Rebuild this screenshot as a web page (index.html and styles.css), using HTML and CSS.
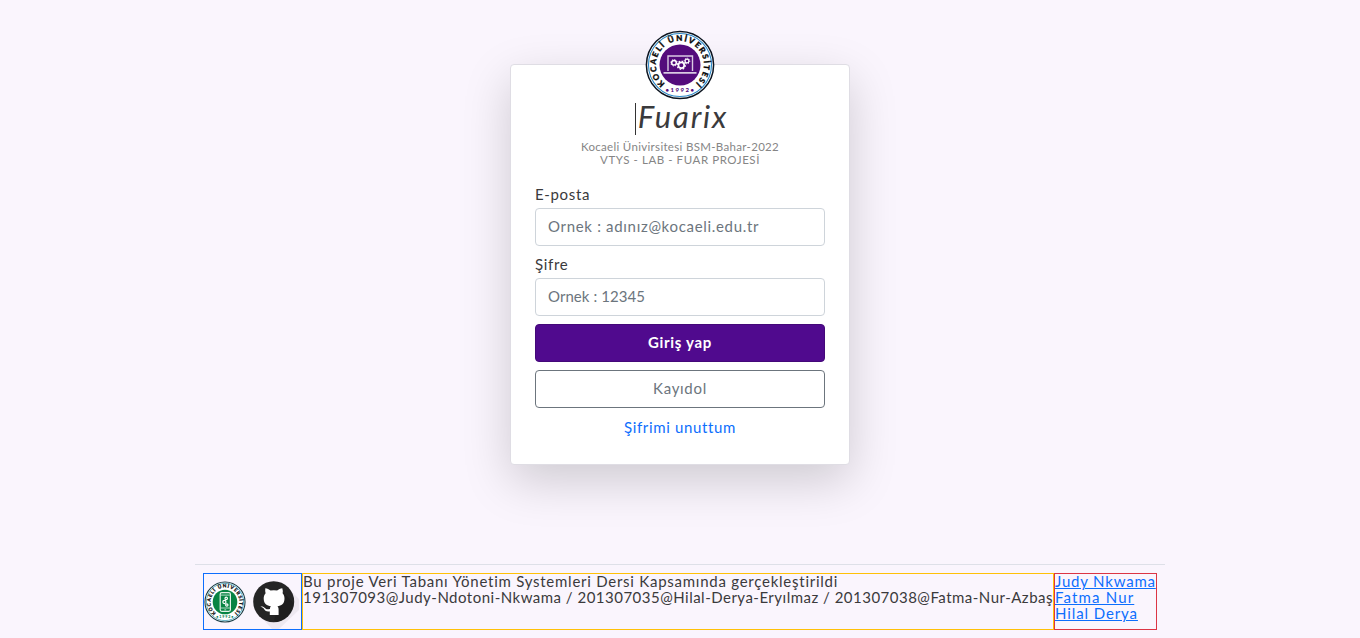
FILE: index.html
```html
<!DOCTYPE html>
<html lang="tr">
<head>
<meta charset="utf-8">
<title>Fuarix</title>
<link rel="stylesheet" href="styles.css">
</head>
<body>
<main class="card">
  <svg class="seal" viewBox="0 0 70 70">
    <circle cx="35" cy="35" r="33.6" fill="#fff" stroke="#0b1420" stroke-width="1.5"/>
    <circle cx="35" cy="35" r="31.5" fill="none" stroke="#2b86c5" stroke-width="1.1"/>
    <circle cx="35" cy="35" r="20.5" fill="#540b7c"/>
    <path id="ring" d="M19.9 53.6A24 24 0 1 1 50.1 53.6" fill="none"/>
    <text class="seal-name"><textPath href="#ring" textLength="117">KOCAELİ ÜNİVERSİTESİ</textPath></text>
    <text class="seal-year purple" x="35.5" y="62">•1992•</text>
    <g fill="none" stroke="#d9c9e2">
      <path d="M23 41V26h24.5V41" stroke-width="1.4"/>
      <path d="M18.5 42.8h33" stroke-width="1.8"/>
    </g>
    <g fill="none" stroke="#fff">
      <circle cx="29" cy="32.8" r="2.3" stroke-width="1.5"/><circle cx="29" cy="32.8" r="3.2" stroke-dasharray="1.25"/>
      <circle cx="36.3" cy="35.3" r="2.9" stroke-width="1.7"/><circle cx="36.3" cy="35.3" r="4.1" stroke-width="1.2" stroke-dasharray="1.6"/>
      <circle cx="42" cy="31" r="1.9" stroke-width="1.2"/><circle cx="42" cy="31" r="2.8" stroke-dasharray="1.05"/>
    </g>
  </svg>
  <h1 class="brand"><span class="caret"></span><i>Fuarix</i></h1>
  <p class="subtitle"><span class="university">Kocaeli Ünivirsitesi BSM-Bahar-2022</span><br><span class="course">VTYS - LAB - FUAR PROJESİ</span></p>
  <form class="form">
    <label class="label" for="mail">E-posta</label>
    <input class="field" id="mail" type="text" placeholder="Ornek : adınız@kocaeli.edu.tr">
    <label class="label second" for="pass">Şifre</label>
    <input class="field password" id="pass" type="text" placeholder="Ornek : 12345">
    <button class="btn primary" type="button">Giriş yap</button>
    <button class="btn outline" type="button">Kayıdol</button>
    <a class="forgot">Şifrimi unuttum</a>
  </form>
</main>
<footer class="footer">
  <div class="box logos">
    <svg class="mini" viewBox="0 0 70 70">
      <circle cx="35" cy="35" r="33.4" fill="#fff" stroke="#173b45" stroke-width="1.8"/>
      <circle cx="35" cy="35" r="31" fill="none" stroke="#3e9bb0" stroke-width="1.3"/>
      <circle cx="35" cy="35" r="20.5" fill="#078443"/>
      <text class="seal-name"><textPath href="#ring" textLength="117">KOCAELİ ÜNİVERSİTESİ</textPath></text>
      <text class="seal-year green" x="35.5" y="62">•1992•</text>
      <rect x="27" y="19.5" width="17" height="31" rx="2.5" fill="none" stroke="#e4f3e9" stroke-width="2"/>
      <path d="M28 23.5h15M28 45h15M34 48h3" stroke="#e4f3e9" stroke-width="1.3"/>
      <g fill="none" stroke="#fff" stroke-width="2"><circle cx="37" cy="29" r="2"/><circle cx="34" cy="35" r="2.6"/><circle cx="38" cy="40" r="2"/></g>
    </svg>
    <svg class="github" viewBox="0 0 49 56">
      <path d="M10 42 37 13 49 25V36L29 55H22Z" fill="#000" opacity=".05"/>
      <circle cx="23.7" cy="27.7" r="20.5" fill="#252525"/>
      <path d="M24 46 34 19 43.2 29A20.5 20.5 0 0 1 26 48Z" fill="#171717" opacity=".45"/>
      <path d="M15.3 14.3c1.9.1 3.8 1.1 5.2 2.2q3.2-.7 6.6 0c1.5-1.1 3.4-2.1 5.2-2.2q.9 2.6.3 5c1.4 1.6 1.9 3.2 1.9 5.2 0 5.4-3.2 7.2-7 7.8.8.8 1.1 1.8 1.1 3.2v5.6h-8.8v-3.7c-3.4.6-5-.8-5.9-2.6-.8-1.2-2-1.5-3.5-2.3 4.1-.7 4.8 2.8 7.2 2.8q1.1 0 2.3-.4.1-1.8 1-2.6c-3.8-.6-7.2-2.4-7.2-7.8 0-2 .5-3.6 1.9-5.2q-.7-2.4-.3-5Z" fill="#fff"/>
    </svg>
  </div>
  <div class="box about"><span class="purpose">Bu proje Veri Tabanı Yönetim Systemleri Dersi Kapsamında gerçekleştirildi</span><span class="members">191307093@Judy-Ndotoni-Nkwama / 201307035@Hilal-Derya-Eryılmaz / 201307038@Fatma-Nur-Azbaş</span></div>
  <div class="box links"><a class="judy">Judy Nkwama</a><a class="fatma">Fatma Nur</a><a class="hilal">Hilal Derya</a></div>
</footer>
</body>
</html>
```

FILE: styles.css
```css
* { box-sizing: border-box; }
body { margin: 0; height: 638px; overflow: hidden; background: #faf5fd; color: #3a3a3c; font: 15px/16px Lato, "Open Sans", sans-serif; letter-spacing: .65px; display: flex; flex-direction: column; align-items: center; }
.card { width: 340px; height: 401px; margin-top: 64px; padding: 0 24px; background: #fff; border: 1px solid #dfdde4; border-radius: 4px; box-shadow: 0 16px 48px rgba(0,0,0,.175); display: flex; flex-direction: column; align-items: center; }
.seal { width: 70px; height: 70px; margin-top: -35px; flex: none; }
.seal-name { font: 900 8px Lato, sans-serif; letter-spacing: 0; fill: #080808; stroke: #080808; stroke-width: .3px; }
.seal-year { font: 900 6px Lato, sans-serif; letter-spacing: 1.5px; text-anchor: middle; }
.purple { fill: #540b7c; }
.green { fill: #087a55; }
.brand { display: flex; align-items: flex-start; margin: 3px 0 0 3px; height: 32px; font-size: 31px; line-height: 27px; font-weight: 400; letter-spacing: 1.8px; white-space: nowrap; }
.caret { width: 1px; height: 32px; margin-right: 2px; background: #333; }
.subtitle { margin: 5px 0 0; height: 26px; font-size: 11.5px; line-height: 13px; color: #858585; text-align: center; white-space: nowrap; }
.university { letter-spacing: .32px; }
.course { letter-spacing: .57px; }
.form { width: 290px; display: flex; flex-direction: column; margin-top: 21px; }
.label { height: 16px; line-height: 15px; margin-bottom: 5px; white-space: nowrap; }
.second { margin-top: 11px; }
.field { width: 290px; height: 38px; padding: 0 12px 3px; border: 1px solid #ced4da; border-radius: 4px; background: #fff; font: 15px Lato, sans-serif; letter-spacing: .68px; }
.password { letter-spacing: .06px; }
.field::placeholder { color: #6c757d; opacity: 1; }
.btn { height: 38px; margin-top: 8px; padding: 0 0 3px; border: 1px solid #6c757d; border-radius: 4px; background: #fff; color: #6c757d; font: 15px Lato, sans-serif; letter-spacing: .7px; }
.primary { background: #500a8e; border-color: #440879; color: #fff; font-weight: 700; }
.forgot { align-self: center; margin-top: 11px; color: #0d6efd; }
.footer { width: 970px; margin-top: 99px; padding: 8px; border-top: 1px solid #dee0e8; display: flex; }
.box { height: 57px; border: 1px solid; white-space: nowrap; }
.logos { width: 99px; border-color: #0d6efd; display: flex; align-items: center; }
.mini { width: 42px; height: 42px; }
.github { width: 49px; height: 56px; margin-left: 4px; }
.about { width: 752px; border-color: #ffc107; display: flex; flex-direction: column; }
.about span, .links a { height: 16px; line-height: 15px; }
.purpose { letter-spacing: .75px; }
.members { letter-spacing: .49px; }
.links { width: 103px; border-color: #dc3545; display: flex; flex-direction: column; align-items: flex-start; }
.links a { color: #0d6efd; text-decoration: underline; }
.judy { letter-spacing: .8px; }
.fatma { letter-spacing: 1.15px; }
.hilal { letter-spacing: .9px; }
```
